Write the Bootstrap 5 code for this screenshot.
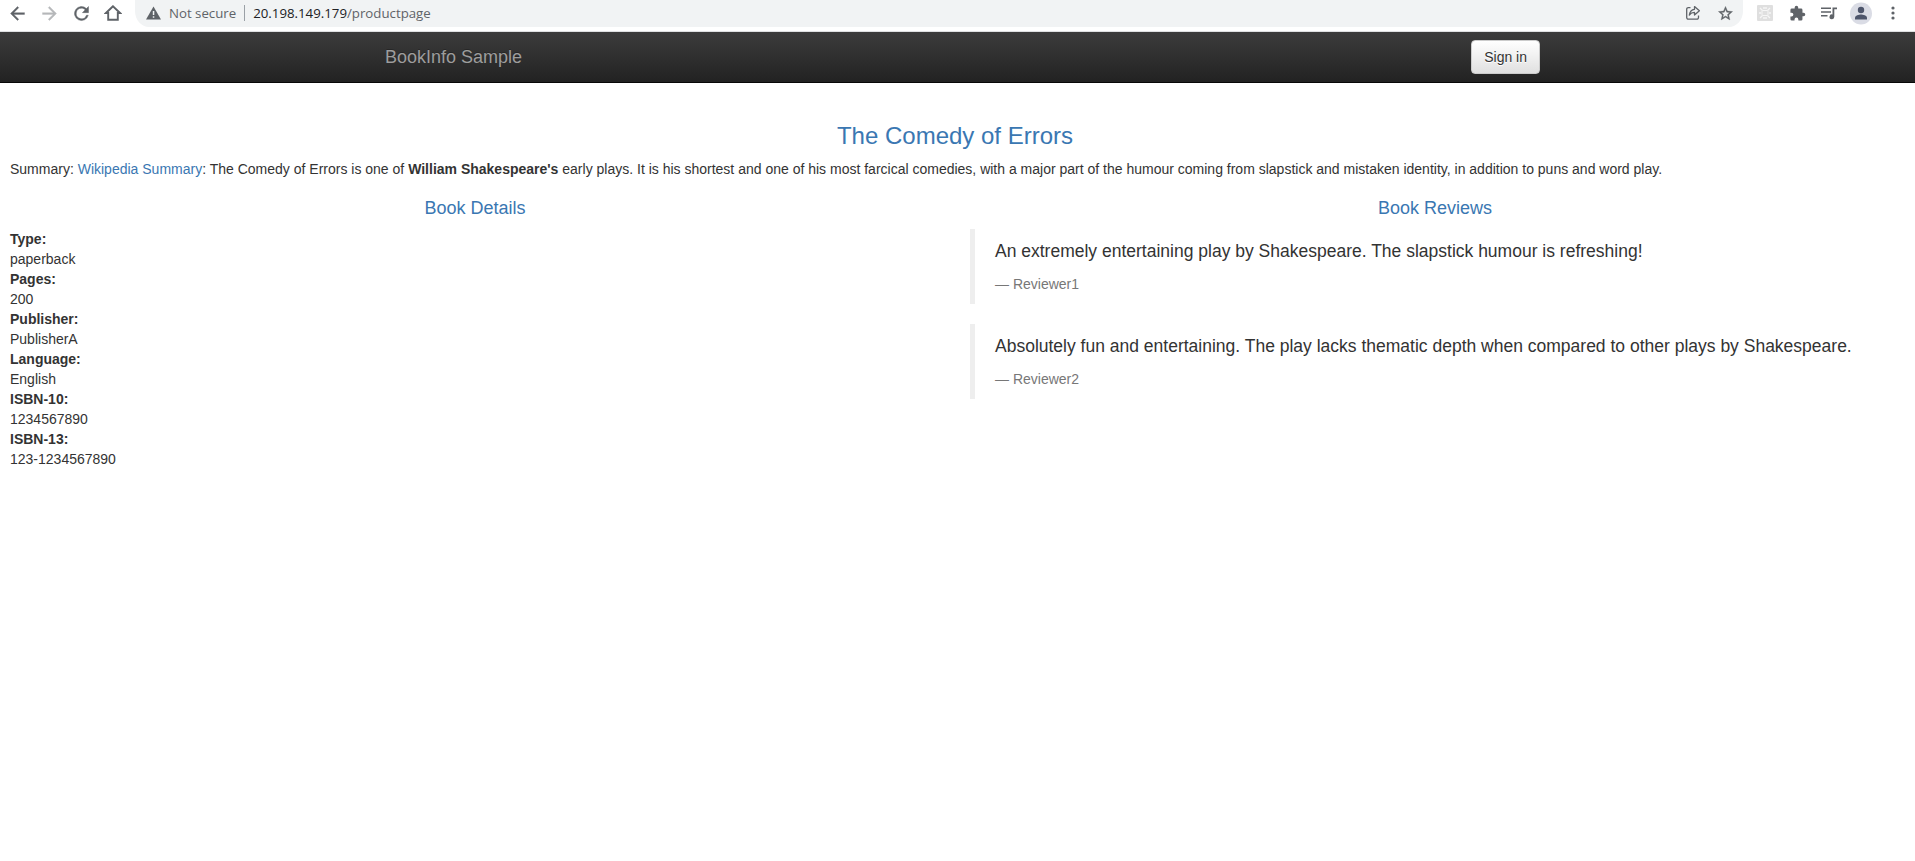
<!DOCTYPE html>
<html lang="en">
<head>
<meta charset="utf-8">
<title>Simple Bookstore App</title>
<link href="https://cdn.jsdelivr.net/npm/bootstrap@5.3.0/dist/css/bootstrap.min.css" rel="stylesheet">
<script src="https://cdn.jsdelivr.net/npm/bootstrap@5.3.0/dist/js/bootstrap.bundle.min.js"></script>
<style>
body{font-family:"Liberation Sans",Arial,sans-serif;font-size:14px;line-height:20px;color:#333;overflow:hidden;height:861px;background:#fff}
.toolbar{height:32px;border-bottom:1px solid #dfe0e2;font-family:"Open Sans","Noto Sans",sans-serif;font-size:13.25px;padding-left:1px;padding-right:6px}
.toolbar .tool{width:32px;height:26px;display:flex;align-items:center;justify-content:center;flex:none}
.toolbar svg{display:block;fill:#5f6368}
.omnibox{height:27px;background:#f1f3f4;border-radius:0 0 14px 14px/0 0 16px 16px;margin-left:6px;margin-right:6px;color:#5f6368}
.omnibox .fields{height:26px;padding-left:7px;padding-right:2px}
.omnibox .host{color:#202124}
.omnibox .split{width:1px;height:16px;background:#9aa0a6}
.topbar{height:51px;background:linear-gradient(#3c3c3c,#222);border-bottom:1px solid #080808;padding:0}
.topbar .inner{width:1155px;margin-left:385px}
.topbar .navbar-brand{font-size:18px;line-height:20px;color:#9d9d9d;padding:0;margin:0;text-shadow:0 -1px 0 rgba(0,0,0,.25)}
.signin{font-size:14px;line-height:20px;padding:6px 12px;border:1px solid #ccc;border-radius:4px;color:#333;background:linear-gradient(#fff,#e0e0e0);text-shadow:0 1px 0 #fff}
.page{padding:40px 15px 0 10px}
.page h3{font-size:24px;line-height:26.4px;font-weight:400;margin:0 0 10px;color:#3a77b2}
.page h4{font-size:18px;line-height:19.8px;font-weight:400;margin:10px 0;color:#3a77b2}
.page p{margin:0 0 10px}
.page a{color:#3a77b2;text-decoration:none}
.page .row{--bs-gutter-x:30px}
.page dd{margin:0}
.review{padding:10px 20px;margin:0 0 20px;font-size:17.5px;line-height:25px;border-left:5px solid #eee}
.review small{display:block;font-size:14px;line-height:20px;color:#777}
</style>
</head>
<body>
<div class="toolbar d-flex align-items-start">
  <div class="tool"><svg width="21" height="21" viewBox="0 0 24 24" stroke="#5f6368" stroke-width=".4"><path d="M20 11H7.8l5.600-5.600L12 4l-8 8 8 8 1.400-1.400L7.800 13H20z"/></svg></div>
  <div class="tool"><svg width="21" height="21" viewBox="0 0 24 24" opacity=".45" stroke="#5f6368" stroke-width=".4"><path d="M12 4l-1.400 1.400 5.600 5.600H4v2h12.200l-5.600 5.600L12 20l8-8z"/></svg></div>
  <div class="tool"><svg width="21" height="21" viewBox="0 0 24 24" stroke="#5f6368" stroke-width=".5"><path d="M17.650 6.350A8 8 0 1 0 19.730 14h-2.080A6 6 0 1 1 12 6c1.660 0 3.140.69 4.220 1.780L13 11h7V4z"/></svg></div>
  <div class="tool"><svg width="18" height="18" viewBox="0 0 18 18"><path d="M9 2.200 2 9h2.200v6.800h9.600V9H16z" fill="none" stroke="#5f6368" stroke-width="1.900"/></svg></div>
  <div class="omnibox d-flex flex-grow-1">
    <div class="fields d-flex align-items-center w-100">
      <svg class="ms-1" width="15" height="14" viewBox="0 0 15 14"><path d="M7.500.5 0 13.500h15z"/><path d="M6.800 5h1.500v4H6.800zm0 5.200h1.500v1.500H6.800z" fill="#f1f3f4"/></svg>
      <span class="ms-2">Not secure</span>
      <span class="split ms-2 me-2"></span>
      <span class="flex-grow-1"><span class="host">20.198.149.179</span>/productpage</span>
      <div class="tool"><svg width="16" height="16" viewBox="0 0 16 16"><path d="M5.500 2.600H3.300a1.600 1.600 0 0 0-1.600 1.600v8.400a1.600 1.600 0 0 0 1.600 1.600h8.600a1.600 1.600 0 0 0 1.600-1.600V10.500M9.500 1.600v2.700C6.300 4.600 4.800 6.700 4.300 10c1.300-1.800 2.900-2.600 5.200-2.600v2.700l4.900-4.300z" fill="none" stroke="#5f6368" stroke-width="1.300" stroke-linejoin="round"/></svg></div>
      <div class="tool"><svg width="17" height="17" viewBox="0 0 24 24"><path d="M22 9.240l-7.190-.62L12 2 9.190 8.630 2 9.240l5.460 4.730L5.820 21 12 17.270 18.180 21l-1.630-7.030zM12 15.400l-3.760 2.270 1-4.280-3.320-2.880 4.380-.38L12 6.100l1.710 4.040 4.380.38-3.320 2.880 1 4.280z" stroke="#5f6368" stroke-width=".5"/></svg></div>
    </div>
  </div>
  <div class="tool"><svg width="16" height="16" viewBox="0 0 16 16"><rect width="16" height="16" rx="1" fill="#dfdfdf"/><path d="M3 3l2.500 2.500M13 3l-2.500 2.500M3 13l2.500-2.500M13 13l-2.500-2.500M6 3h4M6 13h4M2 8h2M12 8h2" stroke="#f6f6f6" stroke-width="1.300"/><rect x="5" y="5.500" width="6" height="5" rx="1" fill="none" stroke="#f6f6f6"/></svg></div>
  <div class="tool"><svg width="17" height="17" viewBox="0 0 24 24"><path d="M20.500 11H19V7a2 2 0 0 0-2-2h-4V3.500a2.500 2.500 0 0 0-5 0V5H4a2 2 0 0 0-2 2v3.800h1.500a2.700 2.700 0 0 1 0 5.400H2V20a2 2 0 0 0 2 2h3.800v-1.500a2.700 2.700 0 0 1 5.400 0V22H17a2 2 0 0 0 2-2v-4h1.500a2.500 2.500 0 0 0 0-5z"/></svg></div>
  <div class="tool"><svg width="17" height="15" viewBox="0 0 17 15"><path d="M0 1.500h10v1.600H0zm0 3.700h10v1.600H0zM0 9h6.500v1.600H0zM11.500 1.500H16v1.700h-2.700v7.600a2.400 2.400 0 1 1-1.800-2.300z"/></svg></div>
  <div class="tool"><svg width="22" height="24" viewBox="0 0 22 24"><circle cx="11" cy="12.500" r="11" fill="#dadce5"/><circle cx="11" cy="9" r="3.200" fill="#4d556b"/><path d="M5 18.500v-1.700c0-2.200 4-3.300 6-3.300s6 1.100 6 3.300v1.700z" fill="#4d556b"/></svg></div>
  <div class="tool"><svg width="4" height="14" viewBox="0 0 4 14"><circle cx="2" cy="2" r="1.600"/><circle cx="2" cy="7" r="1.600"/><circle cx="2" cy="12" r="1.600"/></svg></div>
</div>
<nav class="navbar topbar align-items-start">
  <div class="inner d-flex justify-content-between align-items-center pt-2">
    <a class="navbar-brand" href="#">BookInfo Sample</a>
    <button type="button" class="btn signin">Sign in</button>
  </div>
</nav>
<main class="page">
  <h3 class="text-center">The Comedy of Errors</h3>
  <p>Summary: <a href="#">Wikipedia Summary</a>: The Comedy of Errors is one of <b>William Shakespeare's</b> early plays. It is his shortest and one of his most farcical comedies, with a major part of the humour coming from slapstick and mistaken identity, in addition to puns and word play.</p>
  <div class="row">
    <div class="col-6">
      <h4 class="text-center">Book Details</h4>
      <dl class="mb-0">
        <dt>Type:</dt><dd>paperback</dd>
        <dt>Pages:</dt><dd>200</dd>
        <dt>Publisher:</dt><dd>PublisherA</dd>
        <dt>Language:</dt><dd>English</dd>
        <dt>ISBN-10:</dt><dd>1234567890</dd>
        <dt>ISBN-13:</dt><dd>123-1234567890</dd>
      </dl>
    </div>
    <div class="col-6">
      <h4 class="text-center">Book Reviews</h4>
      <blockquote class="review"><p>An extremely entertaining play by Shakespeare. The slapstick humour is refreshing!</p><small>— Reviewer1</small></blockquote>
      <blockquote class="review"><p>Absolutely fun and entertaining. The play lacks thematic depth when compared to other plays by Shakespeare.</p><small>— Reviewer2</small></blockquote>
    </div>
  </div>
</main>
</body>
</html>
